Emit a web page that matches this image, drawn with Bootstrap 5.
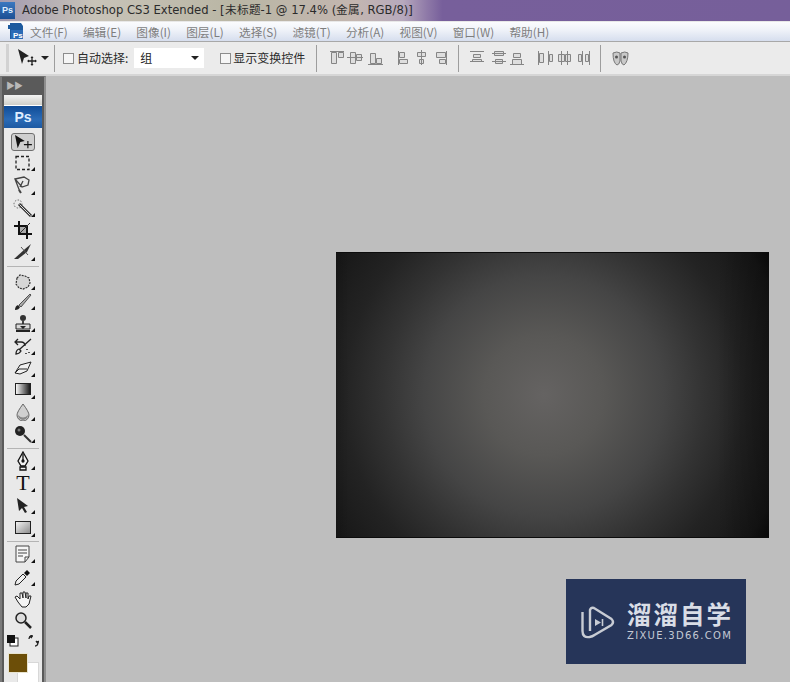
<!DOCTYPE html>
<html lang="zh-CN">
<head>
<meta charset="utf-8">
<title>Adobe Photoshop CS3 Extended</title>
<link href="https://cdn.jsdelivr.net/npm/bootstrap@5.3.0/dist/css/bootstrap.min.css" rel="stylesheet">
<style>
html,body{margin:0;height:682px;overflow:hidden;background:#bebebe}
body{font-family:"Noto Sans CJK SC","Liberation Sans",sans-serif;font-size:12px}
.titlebar{height:21px;background:linear-gradient(90deg,#a39bb0 0,#c8c3b8 12%,#b9b6a4 30%,#c3b6b0 45%,#b7a9bd 51%,#8f7aa8 54%,#775f9b 56%,#765f9a 100%);color:#2b2b2b;font-family:"DejaVu Sans",sans-serif;font-size:11.6px;white-space:nowrap}
.ps-mini{width:15px;height:17px;background:linear-gradient(#3a78c0,#1c4f94);color:#dfeeff;font:700 9px/17px "Liberation Sans",sans-serif;text-align:center;margin-right:7px}
.menubar{height:21px;border-top:1px solid #e8e8e8;border-bottom:1px solid #a8a8a8;background:linear-gradient(#fbfcfe 0,#f0f3f9 40%,#d6deee 100%);color:#7e7e7e;font-size:11.7px;line-height:20px;padding-left:7px}
.menubar .mi{white-space:nowrap;margin-left:15.200px}
.menubar .mi.first{margin-left:6px}
.optbar{height:34px;background:#ebebeb;border-bottom:2px solid #d6d6d6;color:#2c2c2c;padding-left:6px}
.grip{width:3px;height:28px;background:#d2d2d2;margin-right:8px}
.vsep{width:1px;height:27px;background:#9d9d9d;flex:none}
.gap-a{margin-left:5px;margin-right:8px}
.gap-c{margin-left:3px;margin-right:6px}
.gap-d{margin-left:16px;margin-right:2px}
.gap-e{margin-left:11px;margin-right:12px}
.gap-f{margin-left:9px;margin-right:11px}
.gap-g{margin-left:8px;margin-right:11px}
.chk{width:11px;height:11px;background:#f5f5f5;border:1px solid #8c8c8c;flex:none}
.selectbox{width:70px;height:20px;background:#fff;padding:0 5px 0 6px;color:#222;font-size:12px;line-height:22px;flex:none}
.caret-tri{width:0;height:0;border-left:4px solid transparent;border-right:4px solid transparent;border-top:4px solid #222}
.workspace{height:606px}
.toolbox{width:46px;height:606px;background:#5a5a5a;flex:none;border-left:2px solid #7a7a7a;border-right:2px solid #8e8e8e;border-top:1px solid #707070;padding:0 2px}
.toolhead{height:18px;color:#b8b8b8;font-size:9px;line-height:17px;padding-left:2px;letter-spacing:-1px}
.toolpanel{background:#e9e9e9;height:587px}
.toolgrip{height:10px;background:linear-gradient(#f3f3f3,#cfcfc9)}
.psbadge{height:23px;background:linear-gradient(#0f4c97,#2b6bb6 60%,#1d5aa3);color:#dfeeff;font:700 14px/23px "Liberation Sans",sans-serif;text-align:center;margin-bottom:3px;border-top:1px solid #fff}
.tool{position:relative;height:22px}
.tool svg{display:block}
.h20{height:20px}.h21{height:21px}.h23{height:23px}.h24{height:24px}
.tool.more::after{content:"";position:absolute;right:7px;bottom:2px;border-left:4px solid transparent;border-bottom:4px solid #111}
.tool.active svg{background:#cfcfcf;border:1px solid #6f6f6f;border-radius:3px;width:24px;height:18px}
.tsep{height:1px;background:#b4b4b4;margin:3px 3px 1px}
.tsep.wide{margin-bottom:4px}
.tsep.tight{margin:2px 3px 1px}
.swatches{height:20px;position:relative;flex:1}
.bgswatch{position:absolute;left:13px;top:11px;width:22px;height:30px;background:#fff;border:1px solid #d8d8d8}
.fgswatch{position:absolute;left:4px;top:2px;width:20px;height:20px;background:#6c4e08;border:1px solid #e8e4d0}
.swaprow{height:20px}
.stage{padding:176px 0 0 290px}
.doc{width:433px;height:286px;border-top:1px solid #0c0c0c;border-bottom:1px solid #0c0c0c;background:linear-gradient(90deg,rgba(0,0,0,.12) 0,transparent 3%,transparent 88%,rgba(0,0,0,.3) 100%),radial-gradient(circle 270px at 48% 50%,#656362 0,#595856 60px,#454545 120px,#333 160px,#232323 200px,#171717 250px,#0a0a0a 270px)}
.wmark{width:180px;height:85px;margin:41px 0 0 230px;background:#263559;color:#d9dde6;padding-left:15px}
.wm-icon{margin-right:12px}
.wm-cn{font-size:24.5px;font-weight:700;letter-spacing:2px;line-height:28px;white-space:nowrap;margin-top:-1px}
.wm-en{font-family:"DejaVu Sans",sans-serif;font-size:10px;letter-spacing:1.3px;line-height:12px;white-space:nowrap;margin-top:2px;color:#c4c9d4}
.t-glyph{font:400 22px/22px "Liberation Serif",serif;color:#111}
</style>
</head>
<body>
<div class="titlebar d-flex align-items-center">
  <div class="ps-mini">Ps</div><span>Adobe Photoshop CS3 Extended - [未标题-1 @ 17.4% (金属, RGB/8)]</span>
</div>
<div class="menubar d-flex">
  <svg width="17" height="18" viewBox="0 0 17 18" class="flex-none"><path d="M1 3h2V1h11l2 3v13H3V7H1z" fill="#1c5a9e"/><path d="M4 8h12v9H4z" fill="#2b6bb6"/><text x="6" y="16" font-size="8" font-weight="700" fill="#fff" font-family="Liberation Sans">Ps</text></svg>
  <span class="mi first">文件(F)</span><span class="mi">编辑(E)</span><span class="mi">图像(I)</span><span class="mi">图层(L)</span><span class="mi">选择(S)</span><span class="mi">滤镜(T)</span><span class="mi">分析(A)</span><span class="mi">视图(V)</span><span class="mi">窗口(W)</span><span class="mi">帮助(H)</span>
</div>
<div class="optbar d-flex align-items-center">
  <div class="grip"></div>
  <svg width="20" height="20" viewBox="0 0 20 20"><path d="M1 1l11 7-5 2-2 6z" fill="#222"/><path d="M11 13h8M15 9v8" stroke="#222" stroke-width="1.300"/><path d="M10 13l2-1.500v3zM20 13l-2-1.500v3zM15 8l-1.500 2h3zM15 18l-1.500-2h3z" fill="#222"/></svg>
  <div class="caret-tri ms-1"></div>
  <div class="vsep gap-a"></div>
  <div class="chk"></div><span class="gap-c">自动选择:</span>
  <div class="selectbox d-flex align-items-center justify-content-between"><span>组</span><div class="caret-tri"></div></div>
  <div class="chk gap-d"></div><span class="text-nowrap">显示变换控件</span>
  <div class="vsep gap-e"></div>
  <svg width="120" height="20" viewBox="0 0 120 20" fill="#dedede" stroke="#858585">
    <path d="M1 3.500h14M2.500 4.500h5v11h-5zM9.500 4.500h5v5h-5z"/>
    <path d="M18 9.500h16M21.500 4.500h5v11h-5zM27.500 6.500h5v6h-5z"/>
    <path d="M39 16.500h15M41.500 5.500h5v10h-5zM47.500 10.500h5v5h-5z"/>
    <path d="M69.500 3v14M70.500 4.500h5v5h-5zM70.500 11.500h8v4h-8z"/>
    <path d="M92.500 2v15M88.500 4.500h8v4h-8zM90.500 11.500h4v4h-4z"/>
    <path d="M117.500 3v14M107.500 4.500h9v5h-9zM110.500 11.500h6v4h-6z"/>
  </svg>
  <div class="vsep gap-f"></div>
  <svg width="122" height="20" viewBox="0 0 122 20" fill="#dedede" stroke="#858585">
    <path d="M0 3.500h14M0 13.500h14M3.500 6.500h7v3h-7zM2.500 13.500v-2h9v2"/>
    <path d="M22 5.500h14M22 13.500h14M24.500 3.500h9v4h-9zM25.500 11.500h7v4h-7z"/>
    <path d="M40 16.500h14M43.500 5.500h7v4h-7zM42.500 11.500h9v5h-9z"/>
    <path d="M68.500 3v14M69.500 5.500h4v9h-4zM78.500 3v14M79.500 6.500h3v7h-3z"/>
    <path d="M91.500 3v14M88.500 6.500h6v7h-6zM97.500 3v14M95.500 6.500h5v7h-5z"/>
    <path d="M112.500 3v14M108.500 6.500h3v7h-3zM119.500 3v14M115.500 6.500h3v7h-3z"/>
  </svg>
  <div class="vsep gap-g"></div>
  <svg width="17" height="20" viewBox="0 0 17 20"><path d="M1 5q4-2 7 0v8q-1 4-3 4-4-2-4-12zM9 5q4-2 7 0 0 9-4 12-2 0-3-4z" fill="#c9c9c9" stroke="#777"/><circle cx="4.500" cy="9" r="1.500" fill="#555"/><circle cx="12.500" cy="9" r="1.500" fill="#555"/></svg>
</div>
<div class="workspace d-flex">
  <div class="toolbox">
    <div class="toolhead">▶▶</div>
    <div class="toolpanel d-flex flex-column">
      <div class="toolgrip"></div>
      <div class="psbadge">Ps</div>
      <div class="tool active d-flex justify-content-center align-items-center"><svg viewBox="0 0 24 18"><path d="M3 1l11 7-5 1-3 7z" fill="#111"/><path d="M13 12h9M17.500 8v8" stroke="#111" stroke-width="1.300"/></svg></div>
      <div class="tool more h20 d-flex justify-content-center align-items-center"><svg width="16" height="16" viewBox="0 0 16 16"><rect x="1" y="1.500" width="13" height="13" fill="none" stroke="#222" stroke-width="1.300" stroke-dasharray="3 2"/></svg></div>
      <div class="tool more h24 d-flex justify-content-center align-items-center"><svg width="18" height="20" viewBox="0 0 18 20" fill="none" stroke="#444" stroke-width="1.300"><path d="M1 4l9-2 5 3-1 5-6 2zM1 4l5 13M9 6l-3 6"/><path d="M5 15l2 3" stroke-width="2"/></svg></div>
      <div class="tool more d-flex justify-content-center align-items-center"><svg width="20" height="20" viewBox="0 0 20 20" fill="none"><circle cx="5" cy="6" r="4" stroke="#666" stroke-dasharray="1.500 1.500"/><path d="M6 6l12 12" stroke="#333" stroke-width="3"/><path d="M6.500 6.500l11 11" stroke="#ddd"/></svg></div>
      <div class="tool h21 d-flex justify-content-center align-items-center"><svg width="18" height="18" viewBox="0 0 18 18" fill="none" stroke="#111"><path d="M5 0v13h13M0 5h13v13" stroke-width="2"/><path d="M6 6h6v6H6z" fill="#aaa" stroke="none"/><path d="M6 12L16 2" stroke="#333"/></svg></div>
      <div class="tool more h23 d-flex justify-content-center align-items-center"><svg width="20" height="18" viewBox="0 0 20 18"><path d="M1 16L12 6l6-5-4 8-9 7z" fill="#333"/><path d="M8 4l7 8" stroke="#555" stroke-width="1"/></svg></div>
      <div class="tsep wide"></div>
      <div class="tool more h21 d-flex justify-content-center align-items-center"><svg width="18" height="18" viewBox="0 0 18 18"><path d="M3 5l3-3 5 1 4 2 1 5-2 4-5 2-4-1-3-4z" fill="#d6d6d6" stroke="#333" stroke-width="1.200" stroke-dasharray="2 1"/></svg></div>
      <div class="tool more h20 d-flex justify-content-center align-items-center"><svg width="18" height="18" viewBox="0 0 18 18"><path d="M1 17q0-4 3-5l2 2q-1 3-5 3z" fill="#222"/><path d="M5 12L16 1l1 1L7 14z" fill="#aaa" stroke="#333" stroke-width=".8"/></svg></div>
      <div class="tool more d-flex justify-content-center align-items-center"><svg width="18" height="19" viewBox="0 0 18 19"><circle cx="9" cy="4" r="3" fill="#333"/><path d="M8 6h2v4H8z" fill="#444"/><path d="M2 10h14v5H2z" fill="#d8d8d8" stroke="#222"/><path d="M2 16h14v2H2zM6 12h6l-3 3z" fill="#222"/></svg></div>
      <div class="tool more h23 d-flex justify-content-center align-items-center"><svg width="18" height="18" viewBox="0 0 18 18" fill="none" stroke="#222" stroke-width="1.300"><path d="M2 17q0-4 3-5l2 2q-2 3-5 3zM6 12L17 2"/><path d="M1 5h6q4 0 4 4M4 2L1 5l3 3"/><path d="M13 12v1M15 15v1M12 16v1" stroke-width="1.500"/></svg></div>
      <div class="tool more d-flex justify-content-center align-items-center"><svg width="18" height="14" viewBox="0 0 18 14"><path d="M1 12l5-8 11-3-4 9-7 3z" fill="#f0f0f0" stroke="#222"/><path d="M1 12l4-4h8" fill="none" stroke="#222"/></svg></div>
      <div class="tool more d-flex justify-content-center align-items-center"><svg width="16" height="14" viewBox="0 0 16 14"><defs><linearGradient id="gr"><stop offset="0" stop-color="#fff"/><stop offset="1" stop-color="#111"/></linearGradient></defs><rect x=".5" y=".5" width="15" height="11" fill="url(#gr)" stroke="#222"/></svg></div>
      <div class="tool more d-flex justify-content-center align-items-center"><svg width="14" height="18" viewBox="0 0 14 18"><path d="M7 1q6 8 6 11a6 6 0 0 1-12 0q0-3 6-11z" fill="#d0d0d0" stroke="#666"/><path d="M2 12q5 5 10 0a5 5 0 0 1-10 0z" fill="#888"/></svg></div>
      <div class="tool more d-flex justify-content-center align-items-center"><svg width="18" height="18" viewBox="0 0 18 18"><circle cx="6" cy="6" r="5" fill="#222"/><circle cx="5" cy="5" r="1.500" fill="#777"/><path d="M10 10l7 7" stroke="#333" stroke-width="2"/></svg></div>
      <div class="tsep"></div>
      <div class="tool more d-flex justify-content-center align-items-center"><svg width="14" height="20" viewBox="0 0 14 20" fill="#f2f2f2" stroke="#111" stroke-width="1.300"><path d="M7 1l5 9-3 5H5l-3-5z"/><path d="M7 3v7M4 16h6v3H4z"/><circle cx="7" cy="10" r="1" fill="#111"/></svg></div>
      <div class="tool more d-flex justify-content-center align-items-center"><span class="t-glyph">T</span></div>
      <div class="tool more d-flex justify-content-center align-items-center"><svg width="14" height="16" viewBox="0 0 14 16"><path d="M1 1l11 8-4 1 3 5-2 1-3-5-3 3z" fill="#222"/></svg></div>
      <div class="tool more h23 d-flex justify-content-center align-items-center"><svg width="16" height="14" viewBox="0 0 16 14"><defs><linearGradient id="gs" x1="0" y1="0" x2="1" y2="1"><stop offset="0" stop-color="#f5f5f5"/><stop offset="1" stop-color="#8a8a8a"/></linearGradient></defs><rect x=".5" y=".5" width="15" height="12" fill="url(#gs)" stroke="#222"/></svg></div>
      <div class="tsep tight"></div>
      <div class="tool more d-flex justify-content-center align-items-center"><svg width="16" height="18" viewBox="0 0 16 18" fill="#f6f6f6" stroke="#444"><path d="M1 1h13v11l-4 5H1z"/><path d="M10 17v-5h4M3 5h9M3 8h9M3 11h5" fill="none"/></svg></div>
      <div class="tool more h23 d-flex justify-content-center align-items-center"><svg width="18" height="18" viewBox="0 0 18 18"><path d="M1 17l1-4 7-7 3 3-7 7z" fill="#eee" stroke="#222"/><path d="M10 5l3-3 3 3-3 3z" fill="#111"/></svg></div>
      <div class="tool h21 d-flex justify-content-center align-items-center"><svg width="18" height="18" viewBox="0 0 18 18"><path d="M4 12L1 7l2-1 3 3V3l2 0 1 5V2h2l1 6V3h2v6l1-3h2l-2 8-3 3H8z" fill="#f4f4f4" stroke="#222"/></svg></div>
      <div class="tool d-flex justify-content-center align-items-center"><svg width="18" height="18" viewBox="0 0 18 18"><circle cx="7" cy="7" r="5" fill="#ddd" stroke="#222" stroke-width="1.500"/><path d="M11 11l6 6" stroke="#222" stroke-width="2.500"/></svg></div>
      <div class="swaprow d-flex justify-content-center align-items-center gap-2"><svg width="12" height="12" viewBox="0 0 12 12"><rect x="3" y="3" width="8" height="8" fill="#fff" stroke="#222"/><rect x="0" y="0" width="8" height="8" fill="#111"/></svg><svg width="12" height="12" viewBox="0 0 12 12" fill="none" stroke="#222" stroke-width="1.300"><path d="M2 4q0-3 4-3M8 11q3 0 3-4"/><path d="M5 0L3 1.500 5 3M9 6l1.500 2L12 6" fill="#222"/></svg></div>
      <div class="swatches"><div class="bgswatch"></div><div class="fgswatch"></div></div>
    </div>
  </div>
  <div class="stage flex-grow-1">
    <div class="doc"></div>
    <div class="wmark d-flex align-items-center">
      <svg width="34" height="36" viewBox="0 0 34 36" fill="none" stroke="#c8ccd4" stroke-width="2.400" class="flex-none wm-icon"><path d="M1.500 8v19q0 7 7 6 3-.5 5-2l17-10q3-3 0-6L13 4q-3-1-4 2v21"/><path d="M14 15l6 3.500-6 3.500z" fill="#c8ccd4" stroke="none"/><path d="M21.500 15v7" stroke-width="1.600"/></svg>
      <div><div class="wm-cn">溜溜自学</div><div class="wm-en">ZIXUE.3D66.COM</div></div>
    </div>
  </div>
</div>
</body>
</html>
